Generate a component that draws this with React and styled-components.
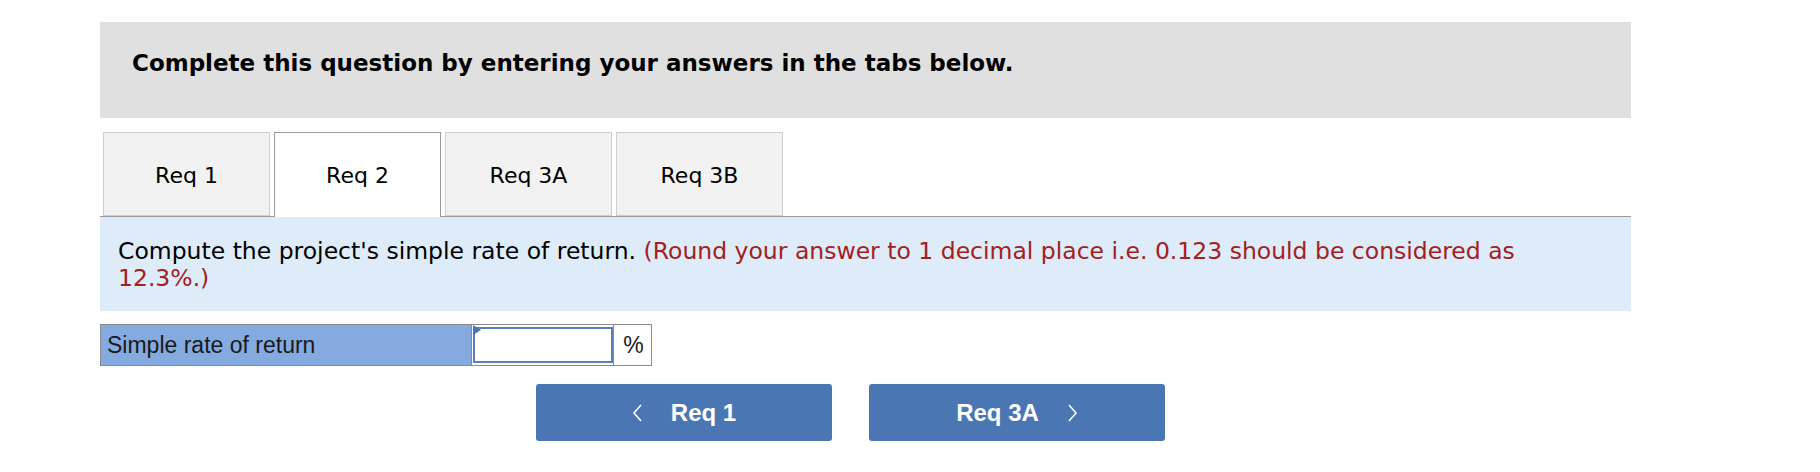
import React from 'react';
import styled, { createGlobalStyle } from 'styled-components';

const GlobalStyle = createGlobalStyle`
   body {
      margin: 0;
      background: #ffffff;
      font-family: "DejaVu Sans", Verdana, sans-serif;
   }
`;

const Page = styled.div`
   width: 1531px;
   padding: 22px 0 0 100px;
`;

const Header = styled.div`
   box-sizing: border-box;
   height: 96px;
   padding: 28px 0 0 32px;
   background-color: #e0e0e0;
   font-weight: bold;
   font-size: 23px;
   line-height: 27px;
   color: #000;
`;

const TabStrip = styled.div`
   display: flex;
   align-items: flex-end;
   gap: 4px;
   margin-top: 14px;
   padding-left: 3px;
   border-bottom: 1px solid #9a9a9a;
`;

const Tab = styled.div`
   display: flex;
   align-items: center;
   justify-content: center;
   box-sizing: border-box;
   width: 167px;
   height: ${(p) => (p.$active ? '85px' : '84px')};
   margin-bottom: ${(p) => (p.$active ? '-1px' : '0')};
   padding-top: ${(p) => (p.$active ? '1px' : '3px')};
   background-color: ${(p) => (p.$active ? '#ffffff' : '#f2f2f2')};
   border: 1px solid ${(p) => (p.$active ? '#9a9a9a' : '#cfcfcf')};
   border-bottom: ${(p) => (p.$active ? 'none' : '1px solid #cfcfcf')};
   font-size: 22px;
   color: #000;
`;

const Instructions = styled.div`
   background-color: #deebf8;
   padding: 21px 100px 19px 18px;
   font-size: 23.5px;
   line-height: 27px;
   color: #000;
`;

const Hint = styled.span`
   color: #a3201e;
`;

const AnswerTable = styled.div`
   display: grid;
   grid-template-columns: 371px 142px 39px;
   width: 552px;
   height: 42px;
   margin-top: 13px;
   box-sizing: border-box;
   border: 1px solid #8a8a8a;
   font-family: "Liberation Sans", Arial, sans-serif;
   font-size: 23px;
`;

const LabelCell = styled.div`
   display: flex;
   align-items: center;
   padding-left: 6px;
   background-color: #84aadf;
   border-right: 1px solid #8a8a8a;
   color: #1a1a1a;
`;

const InputCell = styled.div`
   position: relative;
   padding: 2px 0 2px 1px;
   border-right: 1px solid #8a8a8a;
`;

const Marker = styled.div`
   position: absolute;
   top: 0;
   left: 1px;
   width: 0;
   height: 0;
   border-top: 5px solid transparent;
   border-bottom: 5px solid transparent;
   border-left: 8px solid #4a76b4;
`;

const Input = styled.input`
   box-sizing: border-box;
   width: 100%;
   height: 100%;
   border: 2px solid #5a80bd;
   outline: none;
   background: #fff;
`;

const UnitCell = styled.div`
   display: flex;
   align-items: center;
   justify-content: center;
   color: #1a1a1a;
`;

const NavRow = styled.div`
   display: flex;
   gap: 37px;
   margin-top: 18px;
   padding-left: 436px;
`;

const NavButton = styled.button`
   display: flex;
   align-items: center;
   justify-content: center;
   gap: 28px;
   width: 296px;
   height: 57px;
   padding: 0;
   border: none;
   border-radius: 3px;
   background-color: #4a76b4;
   color: #fff;
   font-family: "Liberation Sans", Arial, sans-serif;
   font-weight: bold;
   font-size: 24px;
`;

const Chevron = ({ dir }) => (
   <svg width="11" height="20" viewBox="0 0 11 20">
      <path
         d={dir === 'left' ? 'M9 2 L2 10 L9 18' : 'M2 2 L9 10 L2 18'}
         fill="none"
         stroke="#fff"
         strokeWidth="1.6"
      />
   </svg>
);

const tabs = ['Req 1', 'Req 2', 'Req 3A', 'Req 3B'];

export default function App() {
   return (
      <>
         <GlobalStyle />
         <Page>
            <Header>Complete this question by entering your answers in the tabs below.</Header>
            <TabStrip>
               {tabs.map((t) => (
                  <Tab key={t} $active={t === 'Req 2'}>
                     {t}
                  </Tab>
               ))}
            </TabStrip>
            <Instructions>
               Compute the project's simple rate of return.{' '}
               <Hint>
                  (Round your answer to 1 decimal place i.e. 0.123 should be considered as 12.3%.)
               </Hint>
            </Instructions>
            <AnswerTable>
               <LabelCell>Simple rate of return</LabelCell>
               <InputCell>
                  <Input type="text" />
                  <Marker />
               </InputCell>
               <UnitCell>%</UnitCell>
            </AnswerTable>
            <NavRow>
               <NavButton>
                  <Chevron dir="left" />
                  Req 1
               </NavButton>
               <NavButton>
                  Req 3A
                  <Chevron dir="right" />
               </NavButton>
            </NavRow>
         </Page>
      </>
   );
}
